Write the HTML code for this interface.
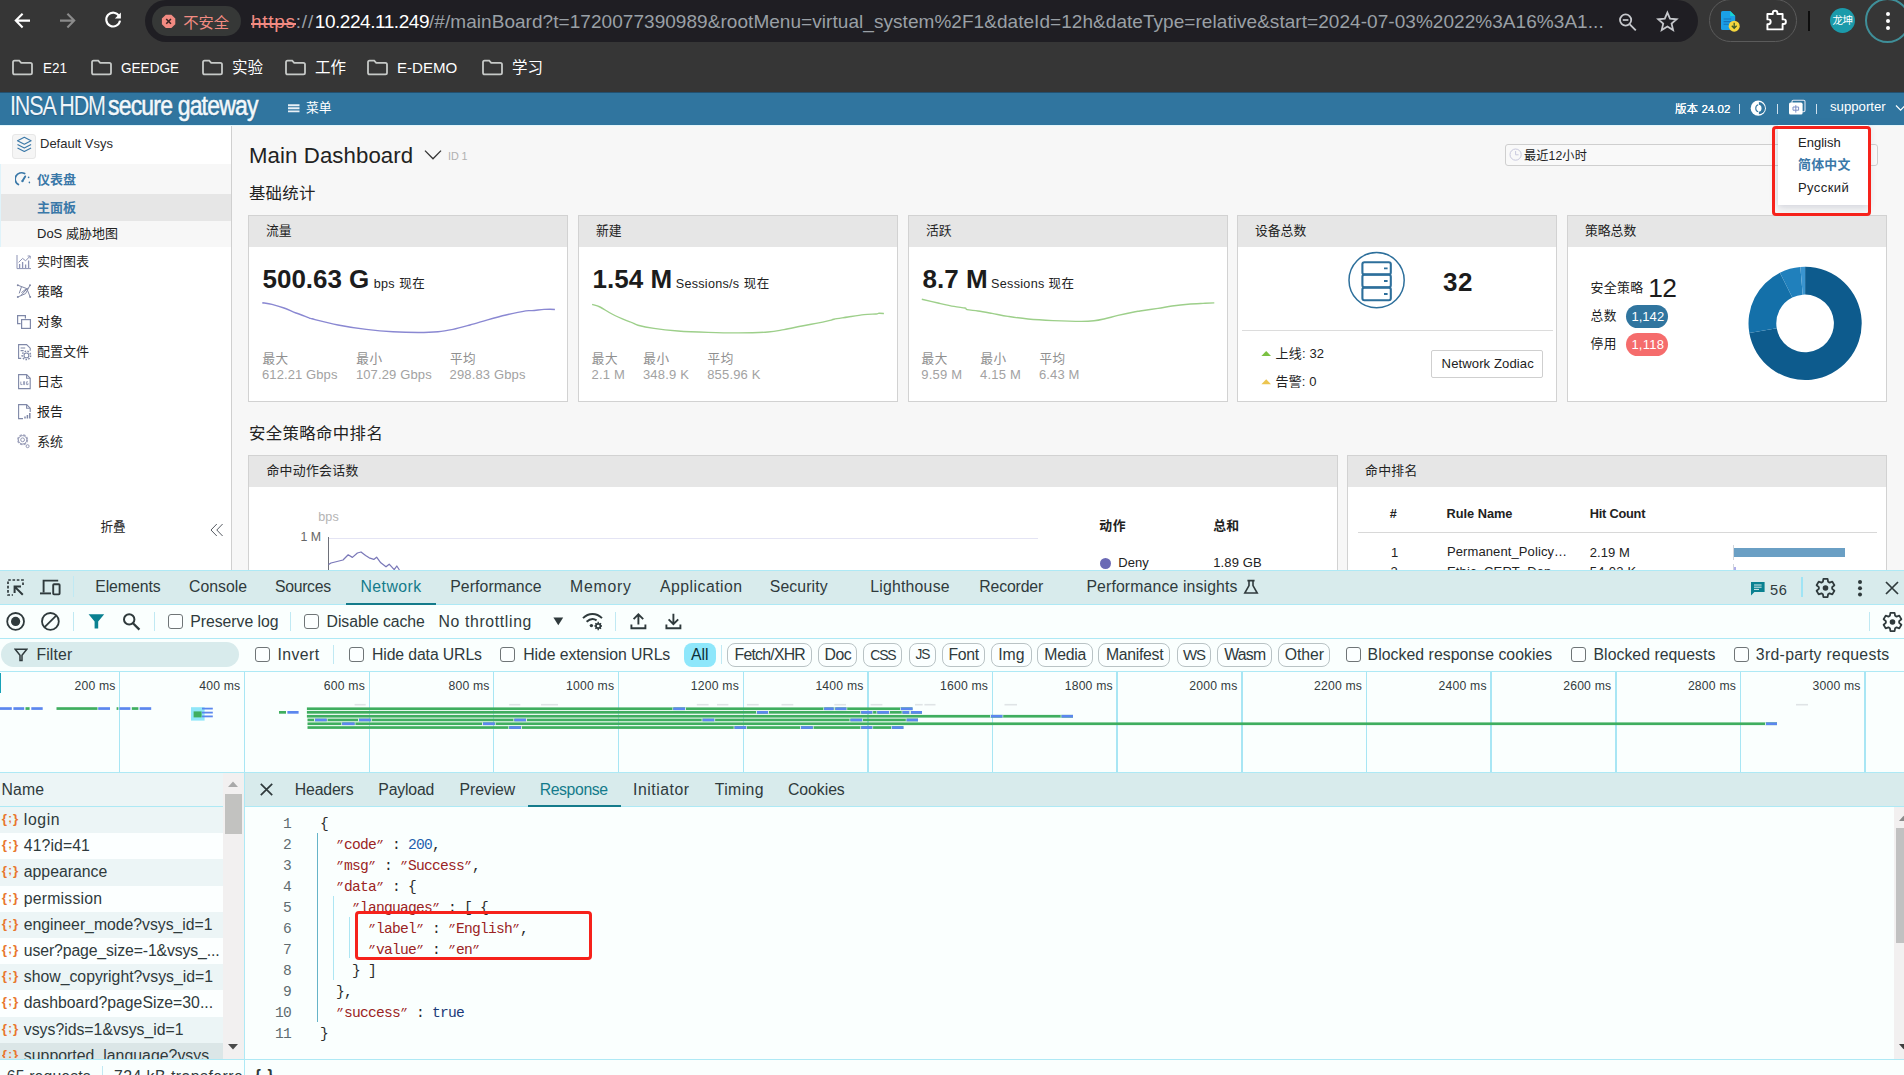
<!DOCTYPE html>
<html lang="zh-CN">
<head>
<meta charset="utf-8">
<title>Main Dashboard</title>
<style>
*{box-sizing:border-box;margin:0;padding:0}
html,body{width:1904px;height:1075px;overflow:hidden;background:#f7f7f7}
body{font-family:"Liberation Sans","Noto Sans CJK SC",sans-serif;position:relative;color:#222}
.abs{position:absolute}
svg{display:block}
/* ---------- browser chrome ---------- */
#chrome{left:0;top:0;width:1904px;height:93px;background:#363636}
#urlpill{left:145px;top:-0.4px;width:1553px;height:42.2px;border-radius:21.1px;background:#1f1e23}
#chip{left:151.6px;top:6.2px;width:89.2px;height:29.8px;border-radius:15px;background:#363837}
.ui{font-family:"Liberation Sans","Noto Sans CJK SC",sans-serif}
.bm{top:56px;font-size:15.5px;line-height:24px;color:#fff;white-space:nowrap}
/* ---------- app header ---------- */
#apphead{left:0;top:92px;width:1904px;height:33px;background:#30759f;border-top:1px solid #23506f}
.hsep{top:104px;width:1px;height:10px;background:#cfe0ec}
/* ---------- sidebar ---------- */
#side{left:0;top:125px;width:232px;height:445px;background:#fff;border-right:1px solid #d0d0d0}
.mi{margin-top:.8px;left:37px;font-size:13px;line-height:18px;color:#222;white-space:nowrap}

.card{background:#fff;border:1px solid #d4d4d4}
.chd{background:#e6e6e6}

.cb{width:15px;height:15px;border:1.4px solid #6f7577;border-radius:3px;background:#fcffff}
.chip{height:24px;border:1px solid #b9c3c5;border-radius:8px;background:#fbffff}
.gl{top:672px;width:1px;height:100px;background:#a8e6f4}

.code{left:320px;font-family:"Liberation Mono","Noto Sans CJK SC",monospace;font-size:14.6px;line-height:21px;white-space:pre;letter-spacing:-0.76px}
.code i{font-style:normal;display:inline-block;width:8px;letter-spacing:0;text-align:center;font-size:12.5px;transform:translateX(-2.3px) skewX(-24deg) translateY(-.5px)}
.lnum{left:270px;width:21px;text-align:right;font-family:"Liberation Mono",monospace;font-size:14.6px;line-height:21px;color:#5f6c70;letter-spacing:-0.76px;white-space:pre}

</style>
</head>
<body>

<!-- ================= BROWSER CHROME ================= -->
<div id="chrome" class="abs"></div>
<div id="urlpill" class="abs"></div>
<div id="chip" class="abs"></div>
<svg class="abs" style="left:12px;top:10px" width="120" height="22" viewBox="0 0 120 22" fill="none" stroke-linecap="butt">
  <path d="M18 10.6H4.2M10.6 3.8L3.8 10.6l6.8 6.8" stroke="#fff" stroke-width="2.1"/>
  <path d="M48 10.6h13.8M55.4 3.8l6.8 6.8-6.8 6.8" stroke="#8b8b8b" stroke-width="2.1"/>
  <path d="M107.2 6.2A6.9 6.9 0 1 0 108 10.6" stroke="#fff" stroke-width="2.1"/>
  <path d="M108.9 2.6v6h-6z" fill="#fff" stroke="none"/>
</svg>
<svg class="abs" style="left:161.2px;top:13.8px" width="15.2" height="14.8" viewBox="0 0 17 17">
  <path d="M5.3 0.8h6.4l4.5 4.5v6.4l-4.5 4.5H5.3L0.8 11.7V5.3z" fill="#f28b82"/>
  <path d="M5.8 5.8l5.4 5.4M11.2 5.8l-5.4 5.4" stroke="#3a2523" stroke-width="1.8"/>
</svg>
<div class="abs ui" style="left:183.2px;top:11.6px;font-size:15.3px;line-height:22px;color:#f28b82;white-space:nowrap">不安全</div>
<div class="abs" style="left:251.0px;top:8.8px;font-size:19px;line-height:26px;color:#f28b82;white-space:pre;letter-spacing:0.68px;">https</div>
<div class="abs" style="left:250.6px;top:22.7px;width:45.4px;height:1.9px;background:#f28b82"></div>
<div class="abs" style="left:295.8px;top:8.8px;font-size:19px;line-height:26px;color:#9aa0a6;white-space:pre;letter-spacing:0.79px;">://</div>
<div class="abs" style="left:314.8px;top:8.8px;font-size:19px;line-height:26px;color:#ffffff;white-space:pre;letter-spacing:-0.45px;">10.224.11.249</div>
<div class="abs" style="left:429.0px;top:8.8px;font-size:19px;line-height:26px;color:#9aa0a6;white-space:pre;letter-spacing:0.05px;">/#/mainBoard?t=1720077390989&amp;rootMenu=virtual_system%2F1&amp;dateId=12h&amp;dateType=relative&amp;start=2024-07-03%2022%3A16%3A1...</div>

<svg class="abs" style="left:1616px;top:10px" width="66" height="24" viewBox="0 0 66 24" fill="none">
  <circle cx="9.6" cy="10" r="5.6" stroke="#c6c8cc" stroke-width="1.8"/>
  <path d="M13.8 14.4l6 6" stroke="#c6c8cc" stroke-width="1.9"/>
  <path d="M6.8 10h5.6" stroke="#c6c8cc" stroke-width="1.7"/>
  <path d="M51.4 2.6l2.6 6.1 6.6.55-5 4.35 1.5 6.45-5.7-3.45-5.7 3.45 1.5-6.45-5-4.35 6.6-.55z" stroke="#c6c8cc" stroke-width="1.8" stroke-linejoin="miter"/>
</svg>
<div class="abs" style="left:1709px;top:-0.6px;width:88px;height:42.8px;border:1px solid #5b5b5b;border-radius:21.4px"></div>
<svg class="abs" style="left:1720px;top:10px" width="22" height="24" viewBox="0 0 22 24">
  <path d="M1 2.6Q1 1 2.6 1h7.6l5 5v12.4q0 1.6-1.6 1.6H2.6Q1 20 1 18.4z" fill="#1a9fe6"/>
  <path d="M10.2 1l5 5h-5z" fill="#17d4d0"/>
  <path d="M3.6 9h7.6M3.6 11.6h7.6M3.6 14.2h5" stroke="#1673b8" stroke-width="1.1"/>
  <circle cx="14.2" cy="16.2" r="5.5" fill="#f5d63d"/>
  <path d="M14.2 12.8v5.2M11.8 15.8l2.4 2.5 2.4-2.5" stroke="#3c5a2a" stroke-width="1.3" fill="none"/>
</svg>
<svg class="abs" style="left:1765px;top:9px" width="23" height="23" viewBox="0 0 23 23" fill="none">
  <path d="M2.4 5h5.4V4a2.3 2.3 0 0 1 4.6 0v1h5.2v5.4h1a2.3 2.3 0 0 1 0 4.6h-1v5.4H2.4v-5.2h.9a2.4 2.4 0 0 0 0-4.8h-.9z" stroke="#fff" stroke-width="1.9" stroke-linejoin="round"/>
</svg>
<div class="abs" style="left:1808px;top:11px;width:2px;height:20px;background:#0d0d0d"></div>
<div class="abs ui" style="left:1830px;top:8px;width:25px;height:25px;border-radius:50%;background:#1b9aaa;color:#fff;font-size:10.5px;line-height:25px;text-align:center;letter-spacing:-0.4px;white-space:nowrap">龙坤</div>
<div class="abs" style="left:1865px;top:-2px;width:45px;height:45px;border:2px solid #3f8f99;border-radius:50%"></div>
<div class="abs" style="left:1885.5px;top:12px;width:4px;height:4px;border-radius:50%;background:#fff;box-shadow:0 7px 0 #fff,0 14px 0 #fff"></div>
<svg class="abs" style="left:12px;top:59px" width="21" height="17" viewBox="0 0 21 17" fill="none"><path d="M1 3.2Q1 1.6 2.6 1.6h4.6l2 2.2h9.2q1.6 0 1.6 1.6v8.4q0 1.6-1.6 1.6H2.6Q1 15.400000000000002 1 13.8z" stroke="#c6c9c7" stroke-width="1.8"/></svg>
<div class="abs bm ui" style="left:43px"><span style="display:inline-block;transform-origin:0 50%;transform:scaleX(0.87)">E21</span></div>
<svg class="abs" style="left:91px;top:59px" width="21" height="17" viewBox="0 0 21 17" fill="none"><path d="M1 3.2Q1 1.6 2.6 1.6h4.6l2 2.2h9.2q1.6 0 1.6 1.6v8.4q0 1.6-1.6 1.6H2.6Q1 15.400000000000002 1 13.8z" stroke="#c6c9c7" stroke-width="1.8"/></svg>
<div class="abs bm ui" style="left:121px"><span style="display:inline-block;transform-origin:0 50%;transform:scaleX(0.876)">GEEDGE</span></div>
<svg class="abs" style="left:202px;top:59px" width="21" height="17" viewBox="0 0 21 17" fill="none"><path d="M1 3.2Q1 1.6 2.6 1.6h4.6l2 2.2h9.2q1.6 0 1.6 1.6v8.4q0 1.6-1.6 1.6H2.6Q1 15.400000000000002 1 13.8z" stroke="#c6c9c7" stroke-width="1.8"/></svg>
<div class="abs bm ui" style="left:232px">实验</div>
<svg class="abs" style="left:285px;top:59px" width="21" height="17" viewBox="0 0 21 17" fill="none"><path d="M1 3.2Q1 1.6 2.6 1.6h4.6l2 2.2h9.2q1.6 0 1.6 1.6v8.4q0 1.6-1.6 1.6H2.6Q1 15.400000000000002 1 13.8z" stroke="#c6c9c7" stroke-width="1.8"/></svg>
<div class="abs bm ui" style="left:315px">工作</div>
<svg class="abs" style="left:367px;top:59px" width="21" height="17" viewBox="0 0 21 17" fill="none"><path d="M1 3.2Q1 1.6 2.6 1.6h4.6l2 2.2h9.2q1.6 0 1.6 1.6v8.4q0 1.6-1.6 1.6H2.6Q1 15.400000000000002 1 13.8z" stroke="#c6c9c7" stroke-width="1.8"/></svg>
<div class="abs bm ui" style="left:397px"><span style="display:inline-block;transform-origin:0 50%;transform:scaleX(0.972)">E-DEMO</span></div>
<svg class="abs" style="left:482px;top:59px" width="21" height="17" viewBox="0 0 21 17" fill="none"><path d="M1 3.2Q1 1.6 2.6 1.6h4.6l2 2.2h9.2q1.6 0 1.6 1.6v8.4q0 1.6-1.6 1.6H2.6Q1 15.400000000000002 1 13.8z" stroke="#c6c9c7" stroke-width="1.8"/></svg>
<div class="abs bm ui" style="left:512px">学习</div>

<!-- ================= APP HEADER ================= -->
<div id="apphead" class="abs"></div>
<div class="abs" style="left:10.2px;top:87.7px;font-size:28.2px;line-height:34px;color:#eef4f9;letter-spacing:-1.5px;white-space:pre;transform-origin:0 50%;transform:scaleX(0.7629);text-shadow:0 1px 1.5px rgba(20,50,80,.3);">INSA HDM</div>
<div class="abs" style="left:108.2px;top:87.7px;font-size:28.2px;line-height:34px;color:#f3f8fb;letter-spacing:-1.0px;white-space:pre;transform-origin:0 50%;transform:scaleX(0.8155);-webkit-text-stroke:.55px #f3f8fb;text-shadow:0 1px 1.5px rgba(20,50,80,.3);">secure gateway</div>

<svg class="abs" style="left:288px;top:104px" width="12" height="9" viewBox="0 0 12 9"><path d="M0 1.2h11.5M0 4.3h11.5M0 7.4h11.5" stroke="#e8f0f6" stroke-width="1.9"/></svg>
<div class="abs" style="left:306px;top:99px;font-size:12.8px;line-height:18px;color:#fff;white-space:nowrap">菜单</div>
<div class="abs" style="left:1675px;top:100px;font-size:11.2px;line-height:18px;color:#fff;white-space:nowrap;font-weight:bold"><span style="font-weight:normal;font-size:11.6px;text-shadow:0 0 .4px #fff">版本 24.02</span></div>
<div class="abs hsep" style="left:1739px"></div>
<svg class="abs" style="left:1750px;top:100px" width="17" height="17" viewBox="0 0 17 17"><circle cx="8.3" cy="8.2" r="7.6" fill="#fff"/><path d="M8.9 2.1a6.1 6.1 0 0 1 0 12.2z" fill="#30759f"/><ellipse cx="8.6" cy="8.2" rx="2.9" ry="3.5" fill="#fff"/><path d="M8.2 4.7a3.2 3.6 0 0 0 0 7" fill="none" stroke="#30759f" stroke-width="1.1"/></svg>
<div class="abs hsep" style="left:1777px"></div>
<svg class="abs" style="left:1788px;top:99px" width="19" height="17" viewBox="0 0 19 17"><rect x="4" y="1.2" width="13" height="11.5" rx="1.4" fill="none" stroke="#dfe6f3" stroke-width="1.1"/><rect x="1" y="3.6" width="13.6" height="12" rx="1.6" fill="#fff"/><path d="M5 8h5.6v3.2H5zM7.8 6.2v7.4" stroke="#7c8fc6" stroke-width="1" fill="none"/></svg>
<div class="abs hsep" style="left:1816px"></div>
<div class="abs" style="left:1830px;top:98px;font-size:13.2px;line-height:18px;color:#fff;white-space:nowrap">supporter</div>
<svg class="abs" style="left:1895px;top:104px" width="10" height="8" viewBox="0 0 10 8"><path d="M1 1.5l4.6 4.6L10.200000000000001 1.5" stroke="#fff" stroke-width="1.2" fill="none"/></svg>

<!-- ================= SIDEBAR ================= -->
<div id="side" class="abs"></div>
<div class="abs" style="left:0;top:164px;width:231px;height:83px;background:#f7f7f7;border-left:1px solid #dff3fa"></div>
<div class="abs" style="left:0;top:194px;width:231px;height:27px;background:#e6e6e6;border-left:1px solid #dff3fa"></div>
<div class="abs" style="left:12px;top:134px;width:24px;height:25px;background:#f5f5f5;border:1px solid #e7e7e7;border-radius:3px"></div>
<svg class="abs" style="left:15.2px;top:135.2px" width="18.6" height="20.6" viewBox="0 0 18 20" fill="none" stroke="#3a78a8" stroke-width="1.1" stroke-linejoin="round"><path d="M9 2.2l6.6 3.4L9 9 2.4 5.6z"/><path d="M2.4 9.2L9 12.6l6.6-3.4"/><path d="M2.4 12.6L9 16l6.6-3.4"/><path d="M2.4 5.6v7M15.6 5.6v7" stroke-width=".0"/></svg>
<div class="abs" style="left:40px;top:135px;font-size:13px;line-height:18px;color:#2b2b2b;white-space:nowrap">Default Vsys</div>
<svg class="abs" style="left:15px;top:171px" width="17" height="16" viewBox="0 0 17 16" fill="none" stroke="#3a78a8" stroke-width="1.7" stroke-linecap="round"><path d="M3.4 13.6A6.3 6.3 0 0 1 9.6 2.6"/><path d="M7.600000000000001 9.8l2.6-4.4" stroke-width="1.9"/><circle cx="7.4" cy="10.2" r="1.1" fill="#3a78a8" stroke="none"/><path d="M13.6 6.2v.2M14.4 11.4v.2" stroke-width="1.6"/></svg>
<div class="abs mi" style="top:170px;color:#3a78a8;font-weight:bold">仪表盘</div>
<div class="abs mi" style="top:198px;color:#3a78a8;font-weight:bold">主面板</div>
<div class="abs mi" style="top:224px">DoS 威胁地图</div>
<svg class="abs" style="left:16px;top:253.7px" width="16" height="16" viewBox="0 0 16 16" fill="none" stroke="#8d93b5" stroke-width="1"><path d="M1 1v13.600000000000001h14"/><path d="M3.6 14v-4M6.6 14V8M9.6 14v-3.4M12.6 14V6.6" stroke-width="1.3"/><path d="M2.6 8.4l4-4 3 2.4 4.400000000000001-4.6M11.6 2h2.6v2.6"/></svg>
<div class="abs mi" style="top:252px">实时图表</div>
<svg class="abs" style="left:16px;top:283px" width="16" height="16" viewBox="0 0 16 16" fill="none" stroke="#8188a6" stroke-width="1"><path d="M1.8 2.2l9 3.4 3.4 8.4M14 2.2L9.6 10.6 1.8 14M5.4 4L3.2 10.4M12.2 4.600000000000001L5 12.4M5.4 9.6l5.2-4"/><circle cx="1.8" cy="2.2" r="1" fill="#8188a6" stroke="none"/><circle cx="14" cy="2.2" r="1" fill="#8188a6" stroke="none"/><circle cx="14.2" cy="14" r="1" fill="#8188a6" stroke="none"/><circle cx="1.8" cy="14" r="1" fill="#8188a6" stroke="none"/></svg>
<div class="abs mi" style="top:282px">策略</div>
<svg class="abs" style="left:16px;top:313.7px" width="16" height="16" viewBox="0 0 16 16" fill="none" stroke="#7f88a8" stroke-width="1.2"><path d="M9.4 4.6V1.6H1.6v8h3"/><rect x="5.6" y="5.6" width="8.8" height="8.8"/></svg>
<div class="abs mi" style="top:312px">对象</div>
<svg class="abs" style="left:17px;top:342.7px" width="16" height="18" viewBox="0 0 16 18" fill="none" stroke="#7f88a8" stroke-width="1.1"><path d="M4.2 15.4H1.6V1.6h8l3.6 3.6v2.6"/><path d="M3.6 5h4.6M3.6 7.6h3"/><circle cx="9.4" cy="12.4" r="2.4"/><circle cx="9.4" cy="12.4" r="4.2" stroke-dasharray="1.6 1.3" stroke-width="1.5"/></svg>
<div class="abs mi" style="top:342px">配置文件</div>
<svg class="abs" style="left:17px;top:372.7px" width="16" height="18" viewBox="0 0 16 18" fill="none" stroke="#7f88a8" stroke-width="1.1"><path d="M1.6 1.6h8l3.6 3.6v10.4H1.6z"/><path d="M9.6 1.6v3.6h3.6"/><path d="M3.8 8.6v3h1.6M7.6 8.6h-1v3h1zM11 8.8H9.6v2.8H11v-1.400000000000002" stroke-width=".8"/></svg>
<div class="abs mi" style="top:372px">日志</div>
<svg class="abs" style="left:17px;top:402.7px" width="16" height="18" viewBox="0 0 16 18" fill="none" stroke="#7f88a8" stroke-width="1.1"><path d="M6 15.6H1.6V1.6h8l3.6 3.6V9"/><path d="M9.6 1.6v3.6h3.6"/><path d="M8 15.6v-2M10.4 15.6v-3.6M12.8 15.6V10" stroke-width="1.5"/></svg>
<div class="abs mi" style="top:402px">报告</div>
<svg class="abs" style="left:16px;top:432.7px" width="17" height="17" viewBox="0 0 17 17" fill="none" stroke="#9297b3" stroke-width="1"><circle cx="6.6" cy="6.8" r="1.9"/><circle cx="6.6" cy="6.8" r="4.9" stroke-dasharray="2.5 1.35" stroke-width="1.3" stroke="#a4a8c0"/><circle cx="6.6" cy="6.8" r="4.2"/><circle cx="11.6" cy="13.2" r="1.5"/></svg>
<div class="abs mi" style="top:432px">系统</div>
<div class="abs" style="left:100.4px;top:517.8px;font-size:12.6px;line-height:18px;color:#222;white-space:nowrap">折叠</div>
<svg class="abs" style="left:209px;top:523px" width="15" height="14" viewBox="0 0 15 14" fill="none" stroke="#565b63" stroke-width="1"><path d="M7.8 1L2 7l5.8 6M13.6 1L7.8 7l5.8 6"/></svg>

<!-- ================= MAIN ================= -->
<div class="abs" style="left:0px;top:125px;width:1904px;height:1px;background:#e3f6fb"></div>
<div class="abs" style="left:249.0px;top:141.8px;font-size:22.2px;line-height:28px;color:#222;white-space:pre;letter-spacing:0.10px;">Main Dashboard</div>
<svg class="abs" style="left:424px;top:149px" width="18" height="12" viewBox="0 0 18 12"><path d="M1 1.6l8 8.200000000000001 8-8.200000000000001" stroke="#333" stroke-width="1.3" fill="none"/></svg>
<div class="abs" style="left:448.0px;top:145.8px;font-size:10.8px;line-height:20px;color:#b0b0b0;white-space:pre;letter-spacing:-0.10px;">ID 1</div>
<div class="abs" style="left:248.9px;top:181.1px;font-size:16.4px;line-height:24px;color:#222;white-space:pre;letter-spacing:0.33px;">基础统计</div>
<div class="abs" style="left:1505px;top:144px;width:373px;height:22px;border:1px solid #cfcfcf;border-radius:3px;background:#f9f9f9"></div>
<svg class="abs" style="left:1509px;top:148px" width="14" height="14" viewBox="0 0 14 14" fill="none" stroke="#c9c9dd" stroke-width="1"><circle cx="6.6" cy="6.600000000000001" r="5.6"/><path d="M6.6 3v3.8h3"/></svg>
<div class="abs" style="left:1524.0px;top:146.0px;font-size:12.2px;line-height:20px;color:#222;white-space:pre;letter-spacing:0.11px;">最近12小时</div>
<div class="abs" style="left:248px;top:215px;width:320px;height:187px;background:#fff;border:1px solid #d2d2d2"></div>
<div class="abs" style="left:249px;top:216px;width:318px;height:31px;background:#e6e6e6"></div>
<div class="abs" style="left:266.0px;top:221.0px;font-size:12.8px;line-height:20px;color:#222;white-space:pre;">流量</div>
<div class="abs" style="left:578px;top:215px;width:320px;height:187px;background:#fff;border:1px solid #d2d2d2"></div>
<div class="abs" style="left:579px;top:216px;width:318px;height:31px;background:#e6e6e6"></div>
<div class="abs" style="left:596.0px;top:221.0px;font-size:12.8px;line-height:20px;color:#222;white-space:pre;">新建</div>
<div class="abs" style="left:908px;top:215px;width:320px;height:187px;background:#fff;border:1px solid #d2d2d2"></div>
<div class="abs" style="left:909px;top:216px;width:318px;height:31px;background:#e6e6e6"></div>
<div class="abs" style="left:926.0px;top:221.0px;font-size:12.8px;line-height:20px;color:#222;white-space:pre;">活跃</div>
<div class="abs" style="left:1237px;top:215px;width:320px;height:187px;background:#fff;border:1px solid #d2d2d2"></div>
<div class="abs" style="left:1238px;top:216px;width:318px;height:31px;background:#e6e6e6"></div>
<div class="abs" style="left:1255.0px;top:221.0px;font-size:12.8px;line-height:20px;color:#222;white-space:pre;">设备总数</div>
<div class="abs" style="left:1567px;top:215px;width:320px;height:187px;background:#fff;border:1px solid #d2d2d2"></div>
<div class="abs" style="left:1568px;top:216px;width:318px;height:31px;background:#e6e6e6"></div>
<div class="abs" style="left:1585.0px;top:221.0px;font-size:12.8px;line-height:20px;color:#222;white-space:pre;">策略总数</div>
<div class="abs" style="left:262.6px;top:262.8px;font-size:26px;line-height:32px;color:#1c1c1c;white-space:pre;font-weight:bold;letter-spacing:-0.05px;">500.63 G</div>
<div class="abs" style="left:373.7px;top:274.0px;font-size:12.6px;line-height:20px;color:#222;white-space:pre;letter-spacing:0.33px;">bps</div>
<div class="abs" style="left:399.2px;top:274.0px;font-size:12.5px;line-height:20px;color:#222;white-space:pre;letter-spacing:0.59px;">现在</div>
<svg class="abs" style="left:248px;top:290px" width="320" height="56" viewBox="0 0 320 56" fill="none"><path d="M14.3 12.7C15.9 13.0 20.4 13.5 24.0 14.4C27.6 15.3 32.0 16.6 36.0 18.0C40.0 19.4 43.8 21.4 48.0 23.0C52.2 24.6 58.4 26.8 61.1 27.8C63.8 28.8 59.2 27.6 64.0 28.8C68.8 30.0 81.0 33.2 90.0 35.0C99.0 36.8 109.1 38.3 118.3 39.4C127.5 40.5 136.3 41.3 145.0 41.8C153.7 42.3 162.8 42.5 170.3 42.5C177.8 42.5 184.2 42.3 190.0 41.8C195.8 41.3 199.7 40.5 205.0 39.4C210.3 38.3 216.2 36.6 222.0 35.0C227.8 33.4 233.6 31.6 239.6 29.9C245.6 28.2 251.6 26.5 258.0 25.0C264.4 23.5 273.5 21.6 277.8 20.9C282.1 20.2 281.0 20.9 284.0 20.6C287.0 20.4 293.0 19.6 296.0 19.4C299.0 19.2 300.2 19.2 302.0 19.2C303.8 19.2 306.1 19.4 306.9 19.5" stroke="#8a88d2" stroke-width="1.4" stroke-linejoin="round"/></svg>
<div class="abs" style="left:262.4px;top:348.8px;font-size:12.6px;line-height:20px;color:#8f8f8f;white-space:pre;letter-spacing:0.61px;">最大</div>
<div class="abs" style="left:262.0px;top:364.5px;font-size:13px;line-height:20px;color:#a2a2a2;white-space:pre;letter-spacing:0.10px;">612.21 Gbps</div>
<div class="abs" style="left:356.3px;top:348.8px;font-size:12.6px;line-height:20px;color:#8f8f8f;white-space:pre;letter-spacing:0.61px;">最小</div>
<div class="abs" style="left:355.9px;top:364.5px;font-size:13px;line-height:20px;color:#a2a2a2;white-space:pre;letter-spacing:0.13px;">107.29 Gbps</div>
<div class="abs" style="left:449.9px;top:348.8px;font-size:12.6px;line-height:20px;color:#8f8f8f;white-space:pre;letter-spacing:0.61px;">平均</div>
<div class="abs" style="left:449.5px;top:364.5px;font-size:13px;line-height:20px;color:#a2a2a2;white-space:pre;letter-spacing:0.15px;">298.83 Gbps</div>
<div class="abs" style="left:592.6px;top:262.8px;font-size:26px;line-height:32px;color:#1c1c1c;white-space:pre;font-weight:bold;">1.54 M</div>
<div class="abs" style="left:675.8px;top:274.0px;font-size:12.6px;line-height:20px;color:#222;white-space:pre;letter-spacing:0.27px;">Sessions/s</div>
<div class="abs" style="left:743.7px;top:274.0px;font-size:12.5px;line-height:20px;color:#222;white-space:pre;letter-spacing:0.44px;">现在</div>
<svg class="abs" style="left:578px;top:290px" width="320" height="56" viewBox="0 0 320 56" fill="none"><path d="M14.1 14.3C15.4 14.8 18.7 15.4 22.0 17.0C25.3 18.6 29.7 21.8 34.0 24.0C38.3 26.2 44.7 29.0 48.0 30.4C51.3 31.8 52.0 31.8 54.0 32.6C56.0 33.4 56.3 34.2 60.0 35.2C63.7 36.2 69.3 37.4 76.0 38.4C82.7 39.4 91.0 40.3 100.0 41.0C109.0 41.7 119.9 42.1 130.0 42.4C140.1 42.7 150.6 43.0 160.6 42.9C170.6 42.8 182.4 42.5 190.0 42.0C197.6 41.5 200.3 40.6 206.0 39.6C211.7 38.6 218.7 37.0 224.0 36.0C229.3 35.0 233.3 34.3 238.0 33.4C242.7 32.5 249.0 31.1 252.0 30.4C255.0 29.7 253.0 29.8 256.0 29.2C259.0 28.6 265.0 27.8 270.0 27.0C275.0 26.2 281.3 25.1 286.0 24.6C290.7 24.1 295.5 24.2 298.0 24.0C300.5 23.8 299.7 23.3 301.0 23.2C302.3 23.1 305.1 23.5 305.9 23.6" stroke="#9dcf8a" stroke-width="1.4" stroke-linejoin="round"/></svg>
<div class="abs" style="left:591.8px;top:348.8px;font-size:12.6px;line-height:20px;color:#8f8f8f;white-space:pre;letter-spacing:0.61px;">最大</div>
<div class="abs" style="left:591.4px;top:364.5px;font-size:13px;line-height:20px;color:#a2a2a2;white-space:pre;letter-spacing:0.26px;">2.1 M</div>
<div class="abs" style="left:643.3px;top:348.8px;font-size:12.6px;line-height:20px;color:#8f8f8f;white-space:pre;letter-spacing:0.61px;">最小</div>
<div class="abs" style="left:642.9px;top:364.5px;font-size:13px;line-height:20px;color:#a2a2a2;white-space:pre;letter-spacing:0.21px;">348.9 K</div>
<div class="abs" style="left:707.6px;top:348.8px;font-size:12.6px;line-height:20px;color:#8f8f8f;white-space:pre;letter-spacing:0.61px;">平均</div>
<div class="abs" style="left:707.2px;top:364.5px;font-size:13px;line-height:20px;color:#a2a2a2;white-space:pre;letter-spacing:0.17px;">855.96 K</div>
<div class="abs" style="left:922.6px;top:262.8px;font-size:26px;line-height:32px;color:#1c1c1c;white-space:pre;font-weight:bold;">8.7 M</div>
<div class="abs" style="left:991.0px;top:274.0px;font-size:12.6px;line-height:20px;color:#222;white-space:pre;letter-spacing:0.31px;">Sessions</div>
<div class="abs" style="left:1048.6px;top:274.0px;font-size:12.5px;line-height:20px;color:#222;white-space:pre;letter-spacing:0.49px;">现在</div>
<svg class="abs" style="left:908px;top:290px" width="320" height="56" viewBox="0 0 320 56" fill="none"><path d="M13.8 9.3C16.5 9.9 24.6 11.8 30.0 13.0C35.4 14.2 41.5 15.6 46.0 16.4C50.5 17.2 54.8 17.5 57.0 18.0C59.2 18.5 56.9 19.1 59.1 19.6C61.3 20.1 65.8 20.4 70.0 21.0C74.2 21.6 79.0 22.5 84.0 23.4C89.0 24.3 94.0 25.5 100.0 26.4C106.0 27.3 112.5 28.3 120.0 29.0C127.5 29.7 136.1 30.2 145.0 30.6C153.9 31.0 166.6 31.4 173.4 31.4C180.2 31.4 182.2 31.2 186.0 30.8C189.8 30.4 192.0 29.9 196.0 29.0C200.0 28.1 205.0 26.6 210.0 25.4C215.0 24.2 222.3 22.7 226.0 22.0C229.7 21.3 228.0 21.6 232.0 21.0C236.0 20.4 244.7 19.2 250.0 18.4C255.3 17.6 259.0 16.7 264.0 16.0C269.0 15.3 274.8 14.6 280.0 14.2C285.2 13.8 290.6 13.6 295.0 13.4C299.4 13.2 304.4 13.0 306.3 12.9" stroke="#9dcf8a" stroke-width="1.4" stroke-linejoin="round"/></svg>
<div class="abs" style="left:921.6px;top:348.8px;font-size:12.6px;line-height:20px;color:#8f8f8f;white-space:pre;letter-spacing:0.61px;">最大</div>
<div class="abs" style="left:921.2px;top:364.5px;font-size:13px;line-height:20px;color:#a2a2a2;white-space:pre;letter-spacing:0.21px;">9.59 M</div>
<div class="abs" style="left:980.4px;top:348.8px;font-size:12.6px;line-height:20px;color:#8f8f8f;white-space:pre;letter-spacing:0.61px;">最小</div>
<div class="abs" style="left:980.0px;top:364.5px;font-size:13px;line-height:20px;color:#a2a2a2;white-space:pre;letter-spacing:0.21px;">4.15 M</div>
<div class="abs" style="left:1039.4px;top:348.8px;font-size:12.6px;line-height:20px;color:#8f8f8f;white-space:pre;letter-spacing:0.61px;">平均</div>
<div class="abs" style="left:1039.0px;top:364.5px;font-size:13px;line-height:20px;color:#a2a2a2;white-space:pre;letter-spacing:0.14px;">6.43 M</div>
<svg class="abs" style="left:1346px;top:250px" width="62" height="62" viewBox="0 0 62 62" fill="none" stroke="#2d6f9b">
<circle cx="30.6" cy="30.2" r="27.6" stroke-width="1.5"/>
<g stroke-width="2.1" stroke-linejoin="round"><rect x="16.4" y="12.2" width="28.4" height="12.2" rx="2"/><rect x="16.4" y="24.8" width="28.4" height="12.4" rx="2"/><rect x="16.4" y="37.6" width="28.4" height="12.6" rx="2"/></g>
<path d="M38 18.4h3.6M38 31h3.6M38 44h3.6" stroke-width="1.9"/>
</svg>
<div class="abs" style="left:1443.0px;top:266.4px;font-size:26px;line-height:32px;color:#1c1c1c;white-space:pre;font-weight:bold;letter-spacing:0.54px;">32</div>
<div class="abs" style="left:1242px;top:330px;width:311px;height:1px;background:#dcdcdc"></div>
<svg class="abs" style="left:1261px;top:350px" width="11" height="36" viewBox="0 0 11 36"><path d="M.4 6L5.2 1l4.8 5z" fill="#7bc142"/><path d="M.4 34.2L5.2 29.200000000000003l4.8 5z" fill="#ecc550"/></svg>
<div class="abs" style="left:1275.6px;top:343.8px;font-size:13px;line-height:20px;color:#222;white-space:pre;letter-spacing:0.15px;">上线: 32</div>
<div class="abs" style="left:1275.6px;top:371.8px;font-size:13px;line-height:20px;color:#222;white-space:pre;letter-spacing:0.11px;">告警: 0</div>
<div class="abs" style="left:1431px;top:350px;width:112px;height:28px;background:#fff;border:1px solid #cfcfcf;border-radius:2px"></div>
<div class="abs" style="left:1441.6px;top:354.0px;font-size:13.1px;line-height:20px;color:#222;white-space:pre;letter-spacing:0.09px;">Network Zodiac</div>
<div class="abs" style="left:1590.6px;top:278.0px;font-size:12.9px;line-height:20px;color:#222;white-space:pre;letter-spacing:0.31px;">安全策略</div>
<div class="abs" style="left:1648.3px;top:272.0px;font-size:26.4px;line-height:32px;color:#1c1c1c;white-space:pre;letter-spacing:-0.73px;">12</div>
<div class="abs" style="left:1590.6px;top:305.8px;font-size:12.7px;line-height:20px;color:#222;white-space:pre;letter-spacing:0.41px;">总数</div>
<div class="abs" style="left:1626px;top:305px;width:42px;height:23px;background:#30759f;border-radius:12px"></div>
<div class="abs" style="left:1631.4px;top:306.8px;font-size:13px;line-height:20px;color:#fff;white-space:pre;letter-spacing:0.05px;">1,142</div>
<div class="abs" style="left:1590.6px;top:333.8px;font-size:12.7px;line-height:20px;color:#222;white-space:pre;letter-spacing:0.41px;">停用</div>
<div class="abs" style="left:1626px;top:333px;width:42px;height:23px;background:#f56c6c;border-radius:12px"></div>
<div class="abs" style="left:1631.4px;top:334.8px;font-size:13px;line-height:20px;color:#fff;white-space:pre;letter-spacing:0.24px;">1,118</div>
<svg class="abs" style="left:1745px;top:263px" width="122" height="122" viewBox="1745 263 122 122"><path d="M1805.10 266.80A56.6 56.6 0 1 1 1749.33 333.03L1776.72 328.30A28.8 28.8 0 1 0 1805.10 294.60Z" fill="#0d5b8d"/><path d="M1749.33 333.03A56.6 56.6 0 0 1 1779.93 272.70L1792.29 297.60A28.8 28.8 0 0 0 1776.72 328.30Z" fill="#1470a9"/><path d="M1779.93 272.70A56.6 56.6 0 0 1 1800.36 267.00L1802.69 294.70A28.8 28.8 0 0 0 1792.29 297.60Z" fill="#2080bc"/><path d="M1800.36 267.00A56.6 56.6 0 0 1 1805.10 266.80L1805.10 294.60A28.8 28.8 0 0 0 1802.69 294.70Z" fill="#3a94cf"/></svg>
<div class="abs" style="left:249.0px;top:421.1px;font-size:16.4px;line-height:24px;color:#222;white-space:pre;letter-spacing:0.38px;">安全策略命中排名</div>
<div class="abs" style="left:248px;top:455px;width:1090px;height:130px;background:#fff;border:1px solid #d2d2d2"></div>
<div class="abs" style="left:249px;top:456px;width:1088px;height:31px;background:#e6e6e6"></div>
<div class="abs" style="left:266.4px;top:461.4px;font-size:12.9px;line-height:20px;color:#222;white-space:pre;letter-spacing:0.28px;">命中动作会话数</div>
<div class="abs" style="left:318.2px;top:507.2px;font-size:12.6px;line-height:20px;color:#b4b4b4;white-space:pre;letter-spacing:0.10px;">bps</div>
<div class="abs" style="left:300.4px;top:527.0px;font-size:12.4px;line-height:20px;color:#666;white-space:pre;">1 M</div>
<div class="abs" style="left:328px;top:537px;width:1px;height:40px;background:#6e7079"></div>
<div class="abs" style="left:329px;top:538px;width:709px;height:1px;background:#e4e4f4"></div>
<svg class="abs" style="left:328px;top:545px" width="80" height="28" viewBox="328 545 80 28" fill="none"><path d="M328.6 564.6L331 563l12-3 5.2-5.2 4.2 2.6 5-4.4 3.6-1 4.6 3.4 3.6 2.4 4.6 1.6 2.8-2.2 4.2 5.6 5.2 4 3.2-2.6 5 5.400000000000006 2.6-3.6 2.6 4" stroke="#7a78b8" stroke-width="1.25" stroke-linejoin="round"/></svg>
<div class="abs" style="left:1099.2px;top:516.0px;font-size:12.8px;line-height:20px;color:#222;white-space:pre;font-weight:bold;letter-spacing:0.80px;">动作</div>
<div class="abs" style="left:1213.2px;top:516.0px;font-size:12.8px;line-height:20px;color:#222;white-space:pre;font-weight:bold;letter-spacing:0.30px;">总和</div>
<div class="abs" style="left:1100px;top:558px;width:11px;height:11px;background:#6b69b5;border-radius:50%"></div>
<div class="abs" style="left:1118.2px;top:553.0px;font-size:13px;line-height:20px;color:#222;white-space:pre;letter-spacing:0.06px;">Deny</div>
<div class="abs" style="left:1213.2px;top:553.0px;font-size:13px;line-height:20px;color:#222;white-space:pre;letter-spacing:0.13px;">1.89 GB</div>
<div class="abs" style="left:1347px;top:455px;width:540px;height:130px;background:#fff;border:1px solid #d2d2d2"></div>
<div class="abs" style="left:1348px;top:456px;width:538px;height:31px;background:#e6e6e6"></div>
<div class="abs" style="left:1365.0px;top:461.4px;font-size:12.9px;line-height:20px;color:#222;white-space:pre;letter-spacing:0.26px;">命中排名</div>
<div class="abs" style="left:1389.8px;top:504.0px;font-size:12.6px;line-height:20px;color:#222;white-space:pre;font-weight:bold;">#</div>
<div class="abs" style="left:1446.6px;top:504.0px;font-size:12.8px;line-height:20px;color:#222;white-space:pre;font-weight:bold;letter-spacing:-0.04px;">Rule Name</div>
<div class="abs" style="left:1589.8px;top:504.0px;font-size:12.8px;line-height:20px;color:#222;white-space:pre;font-weight:bold;letter-spacing:-0.24px;">Hit Count</div>
<div class="abs" style="left:1358px;top:532px;width:519px;height:1px;background:#d8d8d8"></div>
<div class="abs" style="left:1391.0px;top:543.0px;font-size:13px;line-height:20px;color:#222;white-space:pre;">1</div>
<div class="abs" style="left:1447.0px;top:542.4px;font-size:13px;line-height:20px;color:#222;white-space:pre;letter-spacing:0.10px;">Permanent_Policy…</div>
<div class="abs" style="left:1589.8px;top:543.0px;font-size:13px;line-height:20px;color:#222;white-space:pre;letter-spacing:0.08px;">2.19 M</div>
<div class="abs" style="left:1733px;top:545px;width:1px;height:15px;background:#d0d6dd"></div>
<div class="abs" style="left:1734px;top:548px;width:111px;height:9px;background:#6a9fc4"></div>
<div class="abs" style="left:1390.6px;top:562.2px;font-size:13px;line-height:20px;color:#222;white-space:pre;">2</div>
<div class="abs" style="left:1447.0px;top:561.8px;font-size:13px;line-height:20px;color:#222;white-space:pre;letter-spacing:0.15px;">Ethic_CERT_Den…</div>
<div class="abs" style="left:1589.8px;top:562.2px;font-size:13px;line-height:20px;color:#222;white-space:pre;letter-spacing:0.28px;">54.02 K</div>
<div class="abs" style="left:1733px;top:564px;width:1px;height:10px;background:#d0d6dd"></div>
<div class="abs" style="left:1734px;top:567px;width:2.4px;height:6px;background:#b0aeea"></div>
<div class="abs" style="left:1778px;top:125px;width:90px;height:80px;background:#fff;box-shadow:0 2px 8px rgba(60,70,110,.22)"></div>
<div class="abs" style="left:1798.0px;top:132.8px;font-size:13px;line-height:20px;color:#222;white-space:pre;letter-spacing:0.02px;">English</div>
<div class="abs" style="left:1798.0px;top:155.0px;font-size:12.9px;line-height:20px;color:#3a78a8;white-space:pre;font-weight:bold;letter-spacing:0.26px;">简体中文</div>
<div class="abs" style="left:1798.0px;top:177.8px;font-size:13px;line-height:20px;color:#222;white-space:pre;letter-spacing:0.42px;">Русский</div>
<div class="abs" style="left:1772px;top:126px;width:99px;height:90px;border:3px solid #f6221b;border-radius:4px"></div>


<!-- ================= DEVTOOLS ================= -->
<div class="abs" style="left:0px;top:570px;width:1904px;height:505px;background:#fafffe"></div>
<div class="abs" style="left:0px;top:570px;width:1904px;height:35px;background:#d8ebec;border-top:1px solid #aee9f5;border-bottom:1px solid #aee9f5"></div>
<div class="abs" style="left:0px;top:638px;width:1904px;height:1px;background:#aee9f5"></div>
<div class="abs" style="left:0px;top:671px;width:1904px;height:1px;background:#aee9f5"></div>
<svg class="abs" style="left:6px;top:578px" width="20" height="20" viewBox="0 0 20 20" fill="none" stroke="#2f3a3c"><path d="M17 7V2H2v15h5" stroke-width="1.7" stroke-dasharray="2.6 1.7"/><path d="M8.6 8.6l8.2 8.2M8.6 15V8.6H15" stroke-width="2"/></svg>
<svg class="abs" style="left:40px;top:578px" width="22" height="20" viewBox="0 0 22 20" fill="none" stroke="#2f3a3c" stroke-width="1.9"><path d="M3.6 14.6V2.6h14.6"/><path d="M0 15.4h11"/><rect x="13.2" y="6.2" width="6.4" height="10.2" rx=".8"/></svg>
<div class="abs" style="left:73px;top:576px;width:1px;height:21px;background:#c0e9f3"></div>
<div class="abs" style="left:95.2px;top:577.2px;font-size:15.8px;line-height:20px;color:#2f3a3c;white-space:pre;letter-spacing:-0.06px;">Elements</div>
<div class="abs" style="left:189.0px;top:577.2px;font-size:15.8px;line-height:20px;color:#2f3a3c;white-space:pre;">Console</div>
<div class="abs" style="left:274.9px;top:577.2px;font-size:15.8px;line-height:20px;color:#2f3a3c;white-space:pre;letter-spacing:-0.29px;">Sources</div>
<div class="abs" style="left:360.4px;top:577.2px;font-size:15.8px;line-height:20px;color:#147b8b;white-space:pre;letter-spacing:0.47px;">Network</div>
<div class="abs" style="left:450.2px;top:577.2px;font-size:15.8px;line-height:20px;color:#2f3a3c;white-space:pre;letter-spacing:0.09px;">Performance</div>
<div class="abs" style="left:570.1px;top:577.2px;font-size:15.8px;line-height:20px;color:#2f3a3c;white-space:pre;letter-spacing:0.77px;">Memory</div>
<div class="abs" style="left:660.1px;top:577.2px;font-size:15.8px;line-height:20px;color:#2f3a3c;white-space:pre;letter-spacing:0.47px;">Application</div>
<div class="abs" style="left:769.8px;top:577.2px;font-size:15.8px;line-height:20px;color:#2f3a3c;white-space:pre;letter-spacing:0.10px;">Security</div>
<div class="abs" style="left:870.2px;top:577.2px;font-size:15.8px;line-height:20px;color:#2f3a3c;white-space:pre;letter-spacing:0.23px;">Lighthouse</div>
<div class="abs" style="left:979.3px;top:577.2px;font-size:15.8px;line-height:20px;color:#2f3a3c;white-space:pre;letter-spacing:-0.16px;">Recorder</div>
<div class="abs" style="left:1086.4px;top:577.2px;font-size:15.8px;line-height:20px;color:#2f3a3c;white-space:pre;letter-spacing:0.14px;">Performance insights</div>
<div class="abs" style="left:346px;top:603px;width:90px;height:2px;background:#147b8b"></div>
<svg class="abs" style="left:1243px;top:579px" width="16" height="16" viewBox="0 0 16 16" fill="none" stroke="#2f3a3c" stroke-width="1.6"><path d="M4.4 1.6h7.2M6 1.6v5L1.8 14h12.4L10 6.6v-5"/></svg>
<svg class="abs" style="left:1751px;top:582px" width="14" height="14" viewBox="0 0 14 14"><path d="M0 0h13.600000000000001v10H3.4L0 13.4z" fill="#0a8191"/><path d="M3 3h7.6M3 5.2h7.6M3 7.4h5" stroke="#d8ebec" stroke-width="1"/></svg>
<div class="abs" style="left:1770.0px;top:580.0px;font-size:14.6px;line-height:20px;color:#2f3a3c;white-space:pre;letter-spacing:0.68px;">56</div>
<div class="abs" style="left:1801.4px;top:577px;width:2px;height:20px;background:#9fe4f5"></div>
<svg class="abs" style="left:1815px;top:578px" width="21" height="20" viewBox="0 0 21 20"><path d="M7.88 3.83L8.41 0.94L12.59 0.94L13.12 3.83L14.53 4.65L17.30 3.66L19.39 7.28L17.15 9.18L17.15 10.82L19.39 12.72L17.30 16.34L14.53 15.35L13.12 16.17L12.59 19.06L8.41 19.06L7.88 16.17L6.47 15.35L3.70 16.34L1.61 12.72L3.85 10.82L3.85 9.18L1.61 7.28L3.70 3.66L6.47 4.65Z" stroke="#2f3a3c" stroke-width="1.8" fill="none" stroke-linejoin="round"/><circle cx="10.5" cy="10" r="2.8" fill="#2f3a3c"/></svg>
<div class="abs" style="left:1858px;top:580px;width:4px;height:4px;background:#2f3a3c;border-radius:50%;box-shadow:0 6.2px 0 #2f3a3c,0 12.4px 0 #2f3a3c"></div>
<svg class="abs" style="left:1885px;top:581px" width="14" height="14" viewBox="0 0 14 14"><path d="M1 1l12 12M13 1L1 13" stroke="#2f3a3c" stroke-width="1.7"/></svg>
<svg class="abs" style="left:5px;top:611px" width="21" height="21" viewBox="0 0 21 21"><circle cx="10.6" cy="10.4" r="8.4" fill="none" stroke="#2f3a3c" stroke-width="1.8"/><circle cx="10.6" cy="10.4" r="4.6" fill="#2f3a3c"/></svg>
<svg class="abs" style="left:40px;top:611px" width="21" height="21" viewBox="0 0 21 21" fill="none" stroke="#2f3a3c" stroke-width="1.8"><circle cx="10.4" cy="10.4" r="8.4"/><path d="M4.6 16.2L16.2 4.6"/></svg>
<div class="abs" style="left:73px;top:612px;width:1px;height:19px;background:#c0e9f3"></div>
<svg class="abs" style="left:88px;top:613px" width="17" height="17" viewBox="0 0 17 17"><path d="M.6 1.2h15.6L10.200000000000001 8.6v6.8H6.6V8.6z" fill="#0a8191"/></svg>
<svg class="abs" style="left:122px;top:612px" width="19" height="19" viewBox="0 0 19 19" fill="none" stroke="#2f3a3c"><circle cx="7.2" cy="7.4" r="5.2" stroke-width="2"/><path d="M11 11.2l6.4 6.4" stroke-width="2.3"/></svg>
<div class="abs" style="left:154px;top:612px;width:1px;height:19px;background:#c0e9f3"></div>
<div class="abs cb" style="left:168px;top:614px;"></div>
<div class="abs" style="left:190.2px;top:612.0px;font-size:15.8px;line-height:20px;color:#2f3a3c;white-space:pre;letter-spacing:-0.02px;">Preserve log</div>
<div class="abs" style="left:290px;top:612px;width:1px;height:19px;background:#c0e9f3"></div>
<div class="abs cb" style="left:304px;top:614px;"></div>
<div class="abs" style="left:326.6px;top:612.0px;font-size:15.8px;line-height:20px;color:#2f3a3c;white-space:pre;letter-spacing:-0.08px;">Disable cache</div>
<div class="abs" style="left:438.4px;top:612.0px;font-size:15.8px;line-height:20px;color:#2f3a3c;white-space:pre;letter-spacing:0.65px;">No throttling</div>
<svg class="abs" style="left:553px;top:617px" width="11" height="9" viewBox="0 0 11 9"><path d="M.4.4h9.8L5.3 8.2z" fill="#2f3a3c"/></svg>
<svg class="abs" style="left:582px;top:611px" width="22" height="20" viewBox="0 0 22 20" fill="none" stroke="#2f3a3c" stroke-width="1.9"><path d="M1 7.2C6.6 1.6 14.4 1.6 20 7.2"/><path d="M4.6 10.8C8 7.6 12 7.6 14.6 9.4"/><circle cx="9.4" cy="14.6" r="1.7" fill="#2f3a3c" stroke="none"/><circle cx="16.2" cy="15" r="2.2" stroke-width="1.7"/><path d="M16.2 10.8v1.6M16.2 17.6v1.6M12.4 15h1.6M18.4 15h1.6M13.4 12.2l1.200000000000001 1.200000000000001M17.8 16.6l1.2 1.2M19 12.2l-1.2 1.200000000000001M14.6 16.6l-1.2 1.2" stroke-width="1.4"/></svg>
<div class="abs" style="left:615px;top:612px;width:1px;height:19px;background:#c0e9f3"></div>
<svg class="abs" style="left:630px;top:613px" width="17" height="17" viewBox="0 0 17 17" fill="none" stroke="#2f3a3c" stroke-width="1.9"><path d="M8.4 11.6V1.6M3.6 6.2l4.8-4.8 4.8 4.8M1.4 11.6v3.6h14v-3.6"/></svg>
<svg class="abs" style="left:665px;top:613px" width="17" height="17" viewBox="0 0 17 17" fill="none" stroke="#2f3a3c" stroke-width="1.9"><path d="M8.4 .8v10M3.6 6.4l4.8 4.8 4.8-4.8M1.4 11.6v3.6h14v-3.6"/></svg>
<div class="abs" style="left:1869px;top:612px;width:1px;height:19px;background:#c0e9f3"></div>
<svg class="abs" style="left:1882px;top:611.8px" width="21" height="20" viewBox="0 0 21 20"><path d="M7.88 3.83L8.41 0.94L12.59 0.94L13.12 3.83L14.53 4.65L17.30 3.66L19.39 7.28L17.15 9.18L17.15 10.82L19.39 12.72L17.30 16.34L14.53 15.35L13.12 16.17L12.59 19.06L8.41 19.06L7.88 16.17L6.47 15.35L3.70 16.34L1.61 12.72L3.85 10.82L3.85 9.18L1.61 7.28L3.70 3.66L6.47 4.65Z" stroke="#2f3a3c" stroke-width="1.8" fill="none" stroke-linejoin="round"/><circle cx="10.5" cy="10" r="2.8" fill="#2f3a3c"/></svg>
<div class="abs" style="left:1px;top:642px;width:238px;height:25px;background:#d8ebec;border-radius:12.5px"></div>
<svg class="abs" style="left:14px;top:648px" width="14" height="14" viewBox="0 0 14 14" fill="none" stroke="#2f3a3c" stroke-width="1.5"><path d="M1.2 1.2h11.6L8 7.2v5.4H6V7.2z"/></svg>
<div class="abs" style="left:36.4px;top:645.2px;font-size:15.8px;line-height:20px;color:#2f3a3c;white-space:pre;letter-spacing:0.15px;">Filter</div>
<div class="abs cb" style="left:255px;top:647px"></div>
<div class="abs" style="left:277.4px;top:645.2px;font-size:15.8px;line-height:20px;color:#2f3a3c;white-space:pre;letter-spacing:0.43px;">Invert</div>
<div class="abs" style="left:333px;top:645px;width:1px;height:19px;background:#c0e9f3"></div>
<div class="abs cb" style="left:349px;top:647px"></div>
<div class="abs" style="left:372.0px;top:645.2px;font-size:15.8px;line-height:20px;color:#2f3a3c;white-space:pre;letter-spacing:-0.12px;">Hide data URLs</div>
<div class="abs cb" style="left:500px;top:647px"></div>
<div class="abs" style="left:523.3px;top:645.2px;font-size:15.8px;line-height:20px;color:#2f3a3c;white-space:pre;letter-spacing:-0.08px;">Hide extension URLs</div>
<div class="abs" style="left:684px;top:643px;width:32px;height:24px;background:#8ee7fb;border-radius:8px"></div>
<div class="abs" style="left:691.1px;top:645.2px;font-size:15.8px;line-height:20px;color:#0c2f38;white-space:pre;letter-spacing:-0.05px;">All</div>
<div class="abs" style="left:721px;top:645px;width:1px;height:19px;background:#c0e9f3"></div>
<div class="abs chip" style="left:727.0px;top:643px;width:84.5px"></div>
<div class="abs" style="left:734.5px;top:645.2px;font-size:15.8px;line-height:20px;color:#2f3a3c;white-space:pre;letter-spacing:-0.75px;">Fetch/XHR</div>
<div class="abs chip" style="left:817.5px;top:643px;width:39.9px"></div>
<div class="abs" style="left:824.5px;top:645.2px;font-size:15.8px;line-height:20px;color:#2f3a3c;white-space:pre;letter-spacing:-0.46px;">Doc</div>
<div class="abs chip" style="left:863.2px;top:643px;width:39.1px"></div>
<div class="abs" style="left:870.2px;top:645.2px;font-size:13.96px;line-height:20px;color:#2f3a3c;white-space:pre;letter-spacing:-1.10px;">CSS</div>
<div class="abs chip" style="left:908.6px;top:643px;width:27.7px"></div>
<div class="abs" style="left:915.5px;top:645.2px;font-size:13.71px;line-height:20px;color:#2f3a3c;white-space:pre;letter-spacing:-1.10px;">JS</div>
<div class="abs chip" style="left:942.1px;top:643px;width:43.4px"></div>
<div class="abs" style="left:948.6px;top:645.2px;font-size:15.8px;line-height:20px;color:#2f3a3c;white-space:pre;letter-spacing:-0.38px;">Font</div>
<div class="abs chip" style="left:991.2px;top:643px;width:40.4px"></div>
<div class="abs" style="left:998.2px;top:645.2px;font-size:15.8px;line-height:20px;color:#2f3a3c;white-space:pre;">Img</div>
<div class="abs chip" style="left:1037.4px;top:643px;width:55.2px"></div>
<div class="abs" style="left:1044.3px;top:645.2px;font-size:15.8px;line-height:20px;color:#2f3a3c;white-space:pre;letter-spacing:-0.29px;">Media</div>
<div class="abs chip" style="left:1098.4px;top:643px;width:71.8px"></div>
<div class="abs" style="left:1105.9px;top:645.2px;font-size:15.8px;line-height:20px;color:#2f3a3c;white-space:pre;letter-spacing:-0.29px;">Manifest</div>
<div class="abs chip" style="left:1176.5px;top:643px;width:34.8px"></div>
<div class="abs" style="left:1183.0px;top:645.2px;font-size:14.96px;line-height:20px;color:#2f3a3c;white-space:pre;letter-spacing:-1.10px;">WS</div>
<div class="abs chip" style="left:1217.4px;top:643px;width:54.9px"></div>
<div class="abs" style="left:1224.3px;top:645.2px;font-size:15.8px;line-height:20px;color:#2f3a3c;white-space:pre;letter-spacing:-0.77px;">Wasm</div>
<div class="abs chip" style="left:1277.9px;top:643px;width:52.4px"></div>
<div class="abs" style="left:1284.8px;top:645.2px;font-size:15.8px;line-height:20px;color:#2f3a3c;white-space:pre;letter-spacing:-0.10px;">Other</div>
<div class="abs cb" style="left:1346px;top:647px"></div>
<div class="abs" style="left:1367.6px;top:645.2px;font-size:15.8px;line-height:20px;color:#2f3a3c;white-space:pre;letter-spacing:0.05px;">Blocked response cookies</div>
<div class="abs cb" style="left:1571px;top:647px"></div>
<div class="abs" style="left:1593.5px;top:645.2px;font-size:15.8px;line-height:20px;color:#2f3a3c;white-space:pre;letter-spacing:0.04px;">Blocked requests</div>
<div class="abs cb" style="left:1734px;top:647px"></div>
<div class="abs" style="left:1755.8px;top:645.2px;font-size:15.8px;line-height:20px;color:#2f3a3c;white-space:pre;letter-spacing:0.31px;">3rd-party requests</div>
<div class="abs" style="left:0px;top:673px;width:1px;height:20px;background:#17a2b8"></div>
<div class="abs gl" style="left:119.3px"></div>
<div class="abs" style="left:74.5px;top:675.8px;font-size:12.2px;line-height:20px;color:#333b3d;white-space:pre;letter-spacing:0.20px;">200 ms</div>
<div class="abs gl" style="left:243.9px"></div>
<div class="abs" style="left:199.2px;top:675.8px;font-size:12.2px;line-height:20px;color:#333b3d;white-space:pre;letter-spacing:0.20px;">400 ms</div>
<div class="abs gl" style="left:368.6px"></div>
<div class="abs" style="left:323.8px;top:675.8px;font-size:12.2px;line-height:20px;color:#333b3d;white-space:pre;letter-spacing:0.20px;">600 ms</div>
<div class="abs gl" style="left:493.2px"></div>
<div class="abs" style="left:448.5px;top:675.8px;font-size:12.2px;line-height:20px;color:#333b3d;white-space:pre;letter-spacing:0.20px;">800 ms</div>
<div class="abs gl" style="left:617.9px"></div>
<div class="abs" style="left:566.1px;top:675.8px;font-size:12.2px;line-height:20px;color:#333b3d;white-space:pre;letter-spacing:0.20px;">1000 ms</div>
<div class="abs gl" style="left:742.5px"></div>
<div class="abs" style="left:690.8px;top:675.8px;font-size:12.2px;line-height:20px;color:#333b3d;white-space:pre;letter-spacing:0.20px;">1200 ms</div>
<div class="abs gl" style="left:867.1px;width:1.5px"></div>
<div class="abs" style="left:815.4px;top:675.8px;font-size:12.2px;line-height:20px;color:#333b3d;white-space:pre;letter-spacing:0.20px;">1400 ms</div>
<div class="abs gl" style="left:991.8px;width:1.5px"></div>
<div class="abs" style="left:940.0px;top:675.8px;font-size:12.2px;line-height:20px;color:#333b3d;white-space:pre;letter-spacing:0.20px;">1600 ms</div>
<div class="abs gl" style="left:1116.4px;width:1.5px"></div>
<div class="abs" style="left:1064.7px;top:675.8px;font-size:12.2px;line-height:20px;color:#333b3d;white-space:pre;letter-spacing:0.20px;">1800 ms</div>
<div class="abs gl" style="left:1241.1px;width:1.5px"></div>
<div class="abs" style="left:1189.3px;top:675.8px;font-size:12.2px;line-height:20px;color:#333b3d;white-space:pre;letter-spacing:0.20px;">2000 ms</div>
<div class="abs gl" style="left:1365.7px;width:1.5px"></div>
<div class="abs" style="left:1314.0px;top:675.8px;font-size:12.2px;line-height:20px;color:#333b3d;white-space:pre;letter-spacing:0.20px;">2200 ms</div>
<div class="abs gl" style="left:1490.3px;width:1.5px"></div>
<div class="abs" style="left:1438.6px;top:675.8px;font-size:12.2px;line-height:20px;color:#333b3d;white-space:pre;letter-spacing:0.20px;">2400 ms</div>
<div class="abs gl" style="left:1615.0px;width:1.5px"></div>
<div class="abs" style="left:1563.2px;top:675.8px;font-size:12.2px;line-height:20px;color:#333b3d;white-space:pre;letter-spacing:0.20px;">2600 ms</div>
<div class="abs gl" style="left:1739.6px;width:1.5px"></div>
<div class="abs" style="left:1687.9px;top:675.8px;font-size:12.2px;line-height:20px;color:#333b3d;white-space:pre;letter-spacing:0.20px;">2800 ms</div>
<div class="abs gl" style="left:1864.3px;width:1.5px"></div>
<div class="abs" style="left:1812.5px;top:675.8px;font-size:12.2px;line-height:20px;color:#333b3d;white-space:pre;letter-spacing:0.20px;">3000 ms</div>
<svg class="abs" style="left:0;top:700px" width="1904" height="32" viewBox="0 700 1904 32"><rect x="0.0" y="707.2" width="11.8" height="2.7" fill="#5b87ee"/><rect x="13.4" y="707.2" width="10.8" height="2.7" fill="#5b87ee"/><rect x="25.5" y="707.2" width="4.1" height="2.7" fill="#3fae5f"/><rect x="31.3" y="707.2" width="11.4" height="2.7" fill="#5b87ee"/><rect x="56.5" y="707.2" width="41.0" height="2.7" fill="#3fae5f"/><rect x="98.2" y="707.2" width="11.8" height="2.7" fill="#5b87ee"/><rect x="116.6" y="707.2" width="1.8" height="2.7" fill="#3fae5f"/><rect x="119.4" y="707.2" width="11.0" height="2.7" fill="#5b87ee"/><rect x="131.8" y="707.2" width="6.6" height="2.7" fill="#3fae5f"/><rect x="139.6" y="707.2" width="11.6" height="2.7" fill="#5b87ee"/><rect x="191" y="707.2" width="13.6" height="13.4" fill="#8fe6f8"/><rect x="193.6" y="711.4" width="8" height="6" fill="#3fae5f"/><rect x="202.0" y="707.7" width="10.8" height="1.8" fill="#5b87ee"/><rect x="202.0" y="711.7" width="10.8" height="1.8" fill="#5b87ee"/><rect x="202.0" y="715.5" width="10.8" height="1.8" fill="#5b87ee"/><rect x="279.0" y="711.0" width="7.0" height="2.7" fill="#3fae5f"/><rect x="287.4" y="711.0" width="11.2" height="2.7" fill="#5b87ee"/><rect x="306.9" y="707.4" width="605.7" height="2.7" fill="#3fae5f"/><rect x="306.9" y="711.0" width="615.1" height="2.7" fill="#3fae5f"/><rect x="306.9" y="714.9" width="766.1" height="2.7" fill="#3fae5f"/><rect x="307.5" y="718.6" width="610.5" height="2.7" fill="#3fae5f"/><rect x="307.5" y="722.4" width="1469.5" height="2.7" fill="#3fae5f"/><rect x="307.5" y="726.2" width="596.0" height="2.7" fill="#3fae5f"/><rect x="672.5" y="707.4" width="0.8" height="2.7" fill="#fafffe"/><rect x="685.0" y="707.4" width="0.8" height="2.7" fill="#fafffe"/><rect x="673.3" y="707.4" width="11.7" height="2.7" fill="#5b87ee"/><rect x="823.4" y="707.4" width="0.8" height="2.7" fill="#fafffe"/><rect x="833.6" y="707.4" width="0.8" height="2.7" fill="#fafffe"/><rect x="824.2" y="707.4" width="9.4" height="2.7" fill="#5b87ee"/><rect x="834.5" y="707.4" width="0.8" height="2.7" fill="#fafffe"/><rect x="846.4" y="707.4" width="0.8" height="2.7" fill="#fafffe"/><rect x="835.3" y="707.4" width="11.1" height="2.7" fill="#5b87ee"/><rect x="900.0" y="707.4" width="0.8" height="2.7" fill="#fafffe"/><rect x="912.6" y="707.4" width="0.8" height="2.7" fill="#fafffe"/><rect x="900.8" y="707.4" width="11.8" height="2.7" fill="#5b87ee"/><rect x="756.2" y="711.0" width="0.8" height="2.7" fill="#fafffe"/><rect x="768.0" y="711.0" width="0.8" height="2.7" fill="#fafffe"/><rect x="757.0" y="711.0" width="11.0" height="2.7" fill="#5b87ee"/><rect x="860.4" y="711.0" width="0.8" height="2.7" fill="#fafffe"/><rect x="872.3" y="711.0" width="0.8" height="2.7" fill="#fafffe"/><rect x="861.2" y="711.0" width="11.1" height="2.7" fill="#5b87ee"/><rect x="876.5" y="711.0" width="0.8" height="2.7" fill="#fafffe"/><rect x="889.0" y="711.0" width="0.8" height="2.7" fill="#fafffe"/><rect x="877.3" y="711.0" width="11.7" height="2.7" fill="#5b87ee"/><rect x="901.7" y="711.0" width="0.8" height="2.7" fill="#fafffe"/><rect x="909.2" y="711.0" width="0.8" height="2.7" fill="#fafffe"/><rect x="902.5" y="711.0" width="6.7" height="2.7" fill="#5b87ee"/><rect x="910.2" y="711.0" width="0.8" height="2.7" fill="#fafffe"/><rect x="922.0" y="711.0" width="0.8" height="2.7" fill="#fafffe"/><rect x="911.0" y="711.0" width="11.0" height="2.7" fill="#5b87ee"/><rect x="990.2" y="714.9" width="0.8" height="2.7" fill="#fafffe"/><rect x="1002.4" y="714.9" width="0.8" height="2.7" fill="#fafffe"/><rect x="991.0" y="714.9" width="11.4" height="2.7" fill="#5b87ee"/><rect x="1060.7" y="714.9" width="0.8" height="2.7" fill="#fafffe"/><rect x="1073.0" y="714.9" width="0.8" height="2.7" fill="#fafffe"/><rect x="1061.5" y="714.9" width="11.5" height="2.7" fill="#5b87ee"/><rect x="314.2" y="718.6" width="0.8" height="2.7" fill="#fafffe"/><rect x="326.7" y="718.6" width="0.8" height="2.7" fill="#fafffe"/><rect x="315.0" y="718.6" width="11.7" height="2.7" fill="#5b87ee"/><rect x="358.2" y="718.6" width="0.8" height="2.7" fill="#fafffe"/><rect x="370.8" y="718.6" width="0.8" height="2.7" fill="#fafffe"/><rect x="359.0" y="718.6" width="11.8" height="2.7" fill="#5b87ee"/><rect x="513.5" y="718.6" width="0.8" height="2.7" fill="#fafffe"/><rect x="526.0" y="718.6" width="0.8" height="2.7" fill="#fafffe"/><rect x="514.3" y="718.6" width="11.7" height="2.7" fill="#5b87ee"/><rect x="701.7" y="718.6" width="0.8" height="2.7" fill="#fafffe"/><rect x="714.3" y="718.6" width="0.8" height="2.7" fill="#fafffe"/><rect x="702.5" y="718.6" width="11.8" height="2.7" fill="#5b87ee"/><rect x="849.6" y="718.6" width="0.8" height="2.7" fill="#fafffe"/><rect x="862.2" y="718.6" width="0.8" height="2.7" fill="#fafffe"/><rect x="850.4" y="718.6" width="11.8" height="2.7" fill="#5b87ee"/><rect x="905.8" y="718.6" width="0.8" height="2.7" fill="#fafffe"/><rect x="918.0" y="718.6" width="0.8" height="2.7" fill="#fafffe"/><rect x="906.6" y="718.6" width="11.4" height="2.7" fill="#5b87ee"/><rect x="341.4" y="722.4" width="0.8" height="2.7" fill="#fafffe"/><rect x="354.6" y="722.4" width="0.8" height="2.7" fill="#fafffe"/><rect x="342.2" y="722.4" width="12.4" height="2.7" fill="#5b87ee"/><rect x="482.2" y="722.4" width="0.8" height="2.7" fill="#fafffe"/><rect x="494.8" y="722.4" width="0.8" height="2.7" fill="#fafffe"/><rect x="483.0" y="722.4" width="11.8" height="2.7" fill="#5b87ee"/><rect x="1765.2" y="722.4" width="0.8" height="2.7" fill="#fafffe"/><rect x="1777.0" y="722.4" width="0.8" height="2.7" fill="#fafffe"/><rect x="1766.0" y="722.4" width="11.0" height="2.7" fill="#5b87ee"/><rect x="508.4" y="726.2" width="0.8" height="2.7" fill="#fafffe"/><rect x="521.0" y="726.2" width="0.8" height="2.7" fill="#fafffe"/><rect x="509.2" y="726.2" width="11.8" height="2.7" fill="#5b87ee"/><rect x="733.7" y="726.2" width="0.8" height="2.7" fill="#fafffe"/><rect x="746.2" y="726.2" width="0.8" height="2.7" fill="#fafffe"/><rect x="734.5" y="726.2" width="11.7" height="2.7" fill="#5b87ee"/><rect x="800.2" y="726.2" width="0.8" height="2.7" fill="#fafffe"/><rect x="812.8" y="726.2" width="0.8" height="2.7" fill="#fafffe"/><rect x="801.0" y="726.2" width="11.8" height="2.7" fill="#5b87ee"/><rect x="860.4" y="726.2" width="0.8" height="2.7" fill="#fafffe"/><rect x="872.3" y="726.2" width="0.8" height="2.7" fill="#fafffe"/><rect x="861.2" y="726.2" width="11.1" height="2.7" fill="#5b87ee"/><rect x="891.0" y="726.2" width="0.8" height="2.7" fill="#fafffe"/><rect x="903.5" y="726.2" width="0.8" height="2.7" fill="#fafffe"/><rect x="891.8" y="726.2" width="11.7" height="2.7" fill="#5b87ee"/><rect x="354.6" y="703.9" width="11.1" height="1.6" fill="#dfe4e6"/><rect x="509.2" y="703.9" width="11.1" height="1.6" fill="#dfe4e6"/><rect x="541.0" y="703.9" width="17.0" height="1.6" fill="#dfe4e6"/><rect x="696.8" y="703.9" width="11.8" height="1.6" fill="#dfe4e6"/><rect x="717.0" y="703.9" width="11.4" height="1.6" fill="#dfe4e6"/><rect x="746.9" y="703.9" width="11.8" height="1.6" fill="#dfe4e6"/><rect x="781.5" y="703.9" width="11.8" height="1.6" fill="#dfe4e6"/><rect x="834.3" y="703.9" width="11.7" height="1.6" fill="#dfe4e6"/><rect x="870.6" y="703.9" width="11.8" height="1.6" fill="#dfe4e6"/><rect x="915.0" y="703.9" width="7.7" height="1.6" fill="#dfe4e6"/><rect x="924.4" y="703.9" width="11.1" height="1.6" fill="#dfe4e6"/><rect x="1004.5" y="703.9" width="12.5" height="1.6" fill="#dfe4e6"/><rect x="1796.0" y="703.9" width="12.0" height="1.6" fill="#dfe4e6"/></svg>
<div class="abs" style="left:0px;top:772px;width:1904px;height:1px;background:#aee9f5"></div>
<div class="abs" style="left:0px;top:773px;width:223px;height:33px;background:#ecf5f6"></div>
<div class="abs" style="left:245px;top:773px;width:1659px;height:33px;background:#d8ebec"></div>
<div class="abs" style="left:0px;top:806px;width:1904px;height:1px;background:#aee9f5"></div>
<div class="abs" style="left:243.6px;top:773px;width:1.6px;height:302px;background:#aee9f5"></div>
<div class="abs" style="left:1.6px;top:779.8px;font-size:15.8px;line-height:20px;color:#2f3a3c;white-space:pre;letter-spacing:0.06px;">Name</div>
<div class="abs" style="left:0px;top:807.0px;width:223px;height:26.2px;background:#ecf5f6"></div>
<div class="abs" style="left:1.8px;top:808.9px;font-size:13.5px;line-height:20px;font-weight:bold;color:#e8772e;white-space:pre;letter-spacing:.7px">{<span style="font-size:11px;position:relative;top:-1px;margin:0 .4px">;</span>}</div>
<div class="abs" style="left:23.8px;top:810.0px;font-size:15.8px;line-height:20px;color:#2f3a3c;white-space:pre;letter-spacing:0.62px;">login</div>
<div class="abs" style="left:0px;top:833.2px;width:223px;height:26.2px;background:#fcffff"></div>
<div class="abs" style="left:1.8px;top:835.1px;font-size:13.5px;line-height:20px;font-weight:bold;color:#e8772e;white-space:pre;letter-spacing:.7px">{<span style="font-size:11px;position:relative;top:-1px;margin:0 .4px">;</span>}</div>
<div class="abs" style="left:23.8px;top:836.2px;font-size:15.8px;line-height:20px;color:#2f3a3c;white-space:pre;letter-spacing:0.09px;">41?id=41</div>
<div class="abs" style="left:0px;top:859.4px;width:223px;height:26.2px;background:#ecf5f6"></div>
<div class="abs" style="left:1.8px;top:861.3px;font-size:13.5px;line-height:20px;font-weight:bold;color:#e8772e;white-space:pre;letter-spacing:.7px">{<span style="font-size:11px;position:relative;top:-1px;margin:0 .4px">;</span>}</div>
<div class="abs" style="left:23.8px;top:862.4px;font-size:15.8px;line-height:20px;color:#2f3a3c;white-space:pre;">appearance</div>
<div class="abs" style="left:0px;top:885.6px;width:223px;height:26.2px;background:#fcffff"></div>
<div class="abs" style="left:1.8px;top:887.5px;font-size:13.5px;line-height:20px;font-weight:bold;color:#e8772e;white-space:pre;letter-spacing:.7px">{<span style="font-size:11px;position:relative;top:-1px;margin:0 .4px">;</span>}</div>
<div class="abs" style="left:23.8px;top:888.6px;font-size:15.8px;line-height:20px;color:#2f3a3c;white-space:pre;letter-spacing:0.20px;">permission</div>
<div class="abs" style="left:0px;top:911.8px;width:223px;height:26.2px;background:#ecf5f6"></div>
<div class="abs" style="left:1.8px;top:913.7px;font-size:13.5px;line-height:20px;font-weight:bold;color:#e8772e;white-space:pre;letter-spacing:.7px">{<span style="font-size:11px;position:relative;top:-1px;margin:0 .4px">;</span>}</div>
<div class="abs" style="left:23.8px;top:914.8px;font-size:15.8px;line-height:20px;color:#2f3a3c;white-space:pre;letter-spacing:-0.02px;">engineer_mode?vsys_id=1</div>
<div class="abs" style="left:0px;top:938.0px;width:223px;height:26.2px;background:#fcffff"></div>
<div class="abs" style="left:1.8px;top:939.9px;font-size:13.5px;line-height:20px;font-weight:bold;color:#e8772e;white-space:pre;letter-spacing:.7px">{<span style="font-size:11px;position:relative;top:-1px;margin:0 .4px">;</span>}</div>
<div class="abs" style="left:23.8px;top:941.0px;font-size:15.8px;line-height:20px;color:#2f3a3c;white-space:pre;letter-spacing:-0.12px;">user?page_size=-1&amp;vsys_...</div>
<div class="abs" style="left:0px;top:964.2px;width:223px;height:26.2px;background:#ecf5f6"></div>
<div class="abs" style="left:1.8px;top:966.1px;font-size:13.5px;line-height:20px;font-weight:bold;color:#e8772e;white-space:pre;letter-spacing:.7px">{<span style="font-size:11px;position:relative;top:-1px;margin:0 .4px">;</span>}</div>
<div class="abs" style="left:23.8px;top:967.2px;font-size:15.8px;line-height:20px;color:#2f3a3c;white-space:pre;">show_copyright?vsys_id=1</div>
<div class="abs" style="left:0px;top:990.4px;width:223px;height:26.2px;background:#fcffff"></div>
<div class="abs" style="left:1.8px;top:992.3px;font-size:13.5px;line-height:20px;font-weight:bold;color:#e8772e;white-space:pre;letter-spacing:.7px">{<span style="font-size:11px;position:relative;top:-1px;margin:0 .4px">;</span>}</div>
<div class="abs" style="left:23.8px;top:993.4px;font-size:15.8px;line-height:20px;color:#2f3a3c;white-space:pre;">dashboard?pageSize=30...</div>
<div class="abs" style="left:0px;top:1016.6px;width:223px;height:26.2px;background:#ecf5f6"></div>
<div class="abs" style="left:1.8px;top:1018.5px;font-size:13.5px;line-height:20px;font-weight:bold;color:#e8772e;white-space:pre;letter-spacing:.7px">{<span style="font-size:11px;position:relative;top:-1px;margin:0 .4px">;</span>}</div>
<div class="abs" style="left:23.8px;top:1019.6px;font-size:15.8px;line-height:20px;color:#2f3a3c;white-space:pre;">vsys?ids=1&amp;vsys_id=1</div>
<div class="abs" style="left:0px;top:1042.8px;width:223px;height:16.2px;background:#dbe6e7"></div>
<div class="abs" style="left:1.8px;top:1044.7px;overflow:hidden;height:13.4px;font-size:13.5px;line-height:20px;font-weight:bold;color:#e8772e;white-space:pre;letter-spacing:.7px">{<span style="font-size:11px;position:relative;top:-1px;margin:0 .4px">;</span>}</div>
<div class="abs" style="left:23.8px;top:1045.8px;font-size:15.8px;line-height:20px;color:#2f3a3c;white-space:pre;letter-spacing:0.04px;overflow:hidden;height:13.4px;">supported_language?vsys</div>
<div class="abs" style="left:223px;top:773px;width:21px;height:286px;background:#f2f0f0"></div>
<svg class="abs" style="left:227px;top:780px" width="12" height="8" viewBox="0 0 12 8"><path d="M1 7L6 1.4 11 7z" fill="#a9a9a9"/></svg>
<div class="abs" style="left:225px;top:794px;width:17px;height:40px;background:#c2c2c0"></div>
<svg class="abs" style="left:227px;top:1043px" width="12" height="8" viewBox="0 0 12 8"><path d="M1 1l5 5.6L11 1z" fill="#4a4a4a"/></svg>
<svg class="abs" style="left:260px;top:783px" width="13" height="13" viewBox="0 0 13 13"><path d="M.8.8l11.4 11.4M12.2.8L.8 12.2" stroke="#2f3a3c" stroke-width="1.7"/></svg>
<div class="abs" style="left:294.8px;top:779.8px;font-size:15.8px;line-height:20px;color:#2f3a3c;white-space:pre;letter-spacing:-0.15px;">Headers</div>
<div class="abs" style="left:378.3px;top:779.8px;font-size:15.8px;line-height:20px;color:#2f3a3c;white-space:pre;letter-spacing:-0.17px;">Payload</div>
<div class="abs" style="left:459.6px;top:779.8px;font-size:15.8px;line-height:20px;color:#2f3a3c;white-space:pre;letter-spacing:-0.11px;">Preview</div>
<div class="abs" style="left:539.7px;top:779.8px;font-size:15.8px;line-height:20px;color:#147b8b;white-space:pre;letter-spacing:-0.39px;">Response</div>
<div class="abs" style="left:633.0px;top:779.8px;font-size:15.8px;line-height:20px;color:#2f3a3c;white-space:pre;letter-spacing:0.53px;">Initiator</div>
<div class="abs" style="left:714.7px;top:779.8px;font-size:15.8px;line-height:20px;color:#2f3a3c;white-space:pre;letter-spacing:0.41px;">Timing</div>
<div class="abs" style="left:788.0px;top:779.8px;font-size:15.8px;line-height:20px;color:#2f3a3c;white-space:pre;letter-spacing:-0.05px;">Cookies</div>
<div class="abs" style="left:528px;top:805px;width:93px;height:2px;background:#147b8b"></div>
<div class="abs lnum" style="top:814.1px">1</div>
<div class="abs code" style="top:814.1px"><span style="color:#2b2b2b">{</span></div>
<div class="abs lnum" style="top:835.1px">2</div>
<div class="abs code" style="top:835.1px">  <span style="color:#9a2424"><i>&quot;</i>code<i>&quot;</i></span><span style="color:#2b2b2b"> : </span><span style="color:#1f5fae">200</span><span style="color:#2b2b2b">,</span></div>
<div class="abs lnum" style="top:856.1px">3</div>
<div class="abs code" style="top:856.1px">  <span style="color:#9a2424"><i>&quot;</i>msg<i>&quot;</i></span><span style="color:#2b2b2b"> : </span><span style="color:#9a2424"><i>&quot;</i>Success<i>&quot;</i></span><span style="color:#2b2b2b">,</span></div>
<div class="abs lnum" style="top:877.1px">4</div>
<div class="abs code" style="top:877.1px">  <span style="color:#9a2424"><i>&quot;</i>data<i>&quot;</i></span><span style="color:#2b2b2b"> : {</span></div>
<div class="abs lnum" style="top:898.1px">5</div>
<div class="abs code" style="top:898.1px">    <span style="color:#9a2424"><i>&quot;</i>languages<i>&quot;</i></span><span style="color:#2b2b2b"> : [ {</span></div>
<div class="abs lnum" style="top:919.1px">6</div>
<div class="abs code" style="top:919.1px">      <span style="color:#9a2424"><i>&quot;</i>label<i>&quot;</i></span><span style="color:#2b2b2b"> : </span><span style="color:#9a2424"><i>&quot;</i>English<i>&quot;</i></span><span style="color:#2b2b2b">,</span></div>
<div class="abs lnum" style="top:940.1px">7</div>
<div class="abs code" style="top:940.1px">      <span style="color:#9a2424"><i>&quot;</i>value<i>&quot;</i></span><span style="color:#2b2b2b"> : </span><span style="color:#9a2424"><i>&quot;</i>en<i>&quot;</i></span></div>
<div class="abs lnum" style="top:961.1px">8</div>
<div class="abs code" style="top:961.1px">    <span style="color:#2b2b2b">} ]</span></div>
<div class="abs lnum" style="top:982.1px">9</div>
<div class="abs code" style="top:982.1px">  <span style="color:#2b2b2b">},</span></div>
<div class="abs lnum" style="top:1003.1px">10</div>
<div class="abs code" style="top:1003.1px">  <span style="color:#9a2424"><i>&quot;</i>success<i>&quot;</i></span><span style="color:#2b2b2b"> : </span><span style="color:#1a3a78">true</span></div>
<div class="abs lnum" style="top:1024.1px">11</div>
<div class="abs code" style="top:1024.1px"><span style="color:#2b2b2b">}</span></div>
<div class="abs" style="left:317px;top:833.4px;width:1px;height:188.2px;background:#66b4c8"></div>
<div class="abs" style="left:333px;top:896.4px;width:1.3px;height:83.6px;background:#ade6f3"></div>
<div class="abs" style="left:349px;top:917.4px;width:1.3px;height:41px;background:#ade6f3"></div>
<div class="abs" style="left:355px;top:911px;width:237px;height:49px;border:3px solid #f6221b;border-radius:4px"></div>
<div class="abs" style="left:1894px;top:807px;width:10px;height:252px;background:#f2f0f0"></div>
<div class="abs" style="left:1896px;top:828px;width:8px;height:115px;background:#c1c1c1"></div>
<svg class="abs" style="left:1899px;top:815px" width="9" height="7" viewBox="0 0 9 7"><path d="M0 6L4.6.8 9 6z" fill="#8a8a8a"/></svg>
<svg class="abs" style="left:1899px;top:1043px" width="9" height="7" viewBox="0 0 9 7"><path d="M0 1l4.6 5.2L9 1z" fill="#3f3f3f"/></svg>
<div class="abs" style="left:0px;top:1059px;width:1904px;height:1px;background:#aee9f5"></div>
<div class="abs" style="left:0px;top:1060px;width:1904px;height:15px;background:#fafffe"></div>
<div class="abs" style="left:244px;top:1060px;width:1px;height:15px;background:#aee9f5"></div>
<div class="abs" style="left:6.8px;top:1066.6px;font-size:15.8px;line-height:20px;color:#2f3a3c;white-space:pre;letter-spacing:0.14px;">65 requests</div>
<div class="abs" style="left:102px;top:1066px;width:1px;height:9px;background:#c0e9f3"></div>
<div class="abs" style="left:113.9px;top:1066.6px;font-size:15.8px;line-height:20px;color:#2f3a3c;white-space:pre;letter-spacing:0.49px;width:129px;overflow:hidden;">724 kB transferred</div>
<div class="abs" style="left:254.8px;top:1065.8px;font-size:15.8px;line-height:20px;color:#2f3a3c;white-space:pre;font-weight:bold;letter-spacing:1.10px;">{ }</div>


</body>
</html>
